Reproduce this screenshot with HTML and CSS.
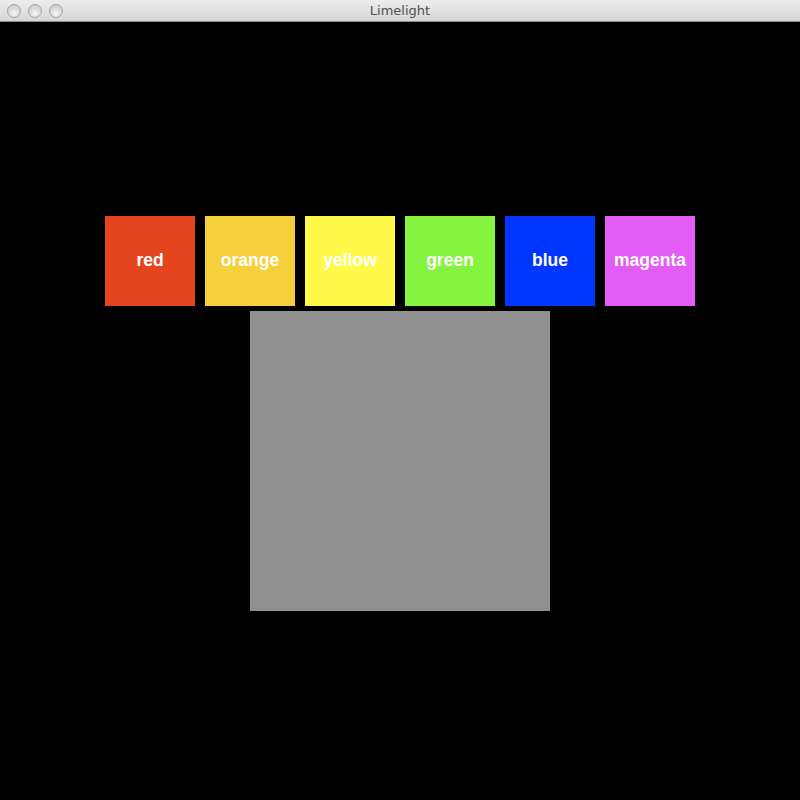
FILE: index.html
```html
<!DOCTYPE html>
<html>
<head>
<meta charset="utf-8">
<title>Limelight</title>
<link rel="stylesheet" href="styles.css">
</head>
<body>
<div class="window">
  <div class="titlebar">
    <div class="lights">
      <span class="light"></span>
      <span class="light"></span>
      <span class="light"></span>
    </div>
    <div class="title">Limelight</div>
  </div>
  <div class="stage">
    <div class="swatches">
      <div class="swatch red">red</div>
      <div class="swatch orange">orange</div>
      <div class="swatch yellow">yellow</div>
      <div class="swatch green">green</div>
      <div class="swatch blue">blue</div>
      <div class="swatch magenta">magenta</div>
    </div>
    <div class="preview"></div>
  </div>
</div>
</body>
</html>
```
FILE: styles.css
```css
html, body {
  margin: 0;
  padding: 0;
  background: #000;
}
.window {
  width: 800px;
  height: 800px;
  display: flex;
  flex-direction: column;
  background: #000;
}
.titlebar {
  height: 21px;
  flex: none;
  position: relative;
  background: linear-gradient(#ededed, #d6d6d6);
  border-bottom: 1px solid #8a8a8a;
  display: flex;
  align-items: center;
  justify-content: center;
}
.lights {
  position: absolute;
  left: 7px;
  top: 4px;
  display: flex;
  gap: 7px;
}
.light {
  width: 14px;
  height: 14px;
  border-radius: 50%;
  box-sizing: border-box;
  border: 1px solid #a3a3a3;
  background: radial-gradient(circle at 50% 70%, #f8f8f8 0%, #dcdcdc 45%, #c4c4c4 100%);
}
.title {
  font-family: "DejaVu Sans", "Liberation Sans", sans-serif;
  font-size: 13px;
  color: #4e4e4e;
  line-height: 21px;
}
.stage {
  flex: 1;
  display: flex;
  flex-direction: column;
  align-items: center;
  padding-top: 194px;
}
.swatches {
  display: flex;
  gap: 10px;
}
.swatch {
  width: 90px;
  height: 90px;
  display: flex;
  align-items: center;
  justify-content: center;
  font-family: "Liberation Sans", Arial, sans-serif;
  font-weight: bold;
  font-size: 17.5px;
  color: #fff;
  padding-bottom: 2px;
  box-sizing: border-box;
}
.red { background: #e5451e; }
.orange { background: #f5d03a; }
.yellow { background: #fffa4a; }
.green { background: #85f43e; }
.blue { background: #0036ff; }
.magenta { background: #e35cf5; }
.preview {
  margin-top: 5px;
  width: 300px;
  height: 300px;
  background: #909090;
}
```
